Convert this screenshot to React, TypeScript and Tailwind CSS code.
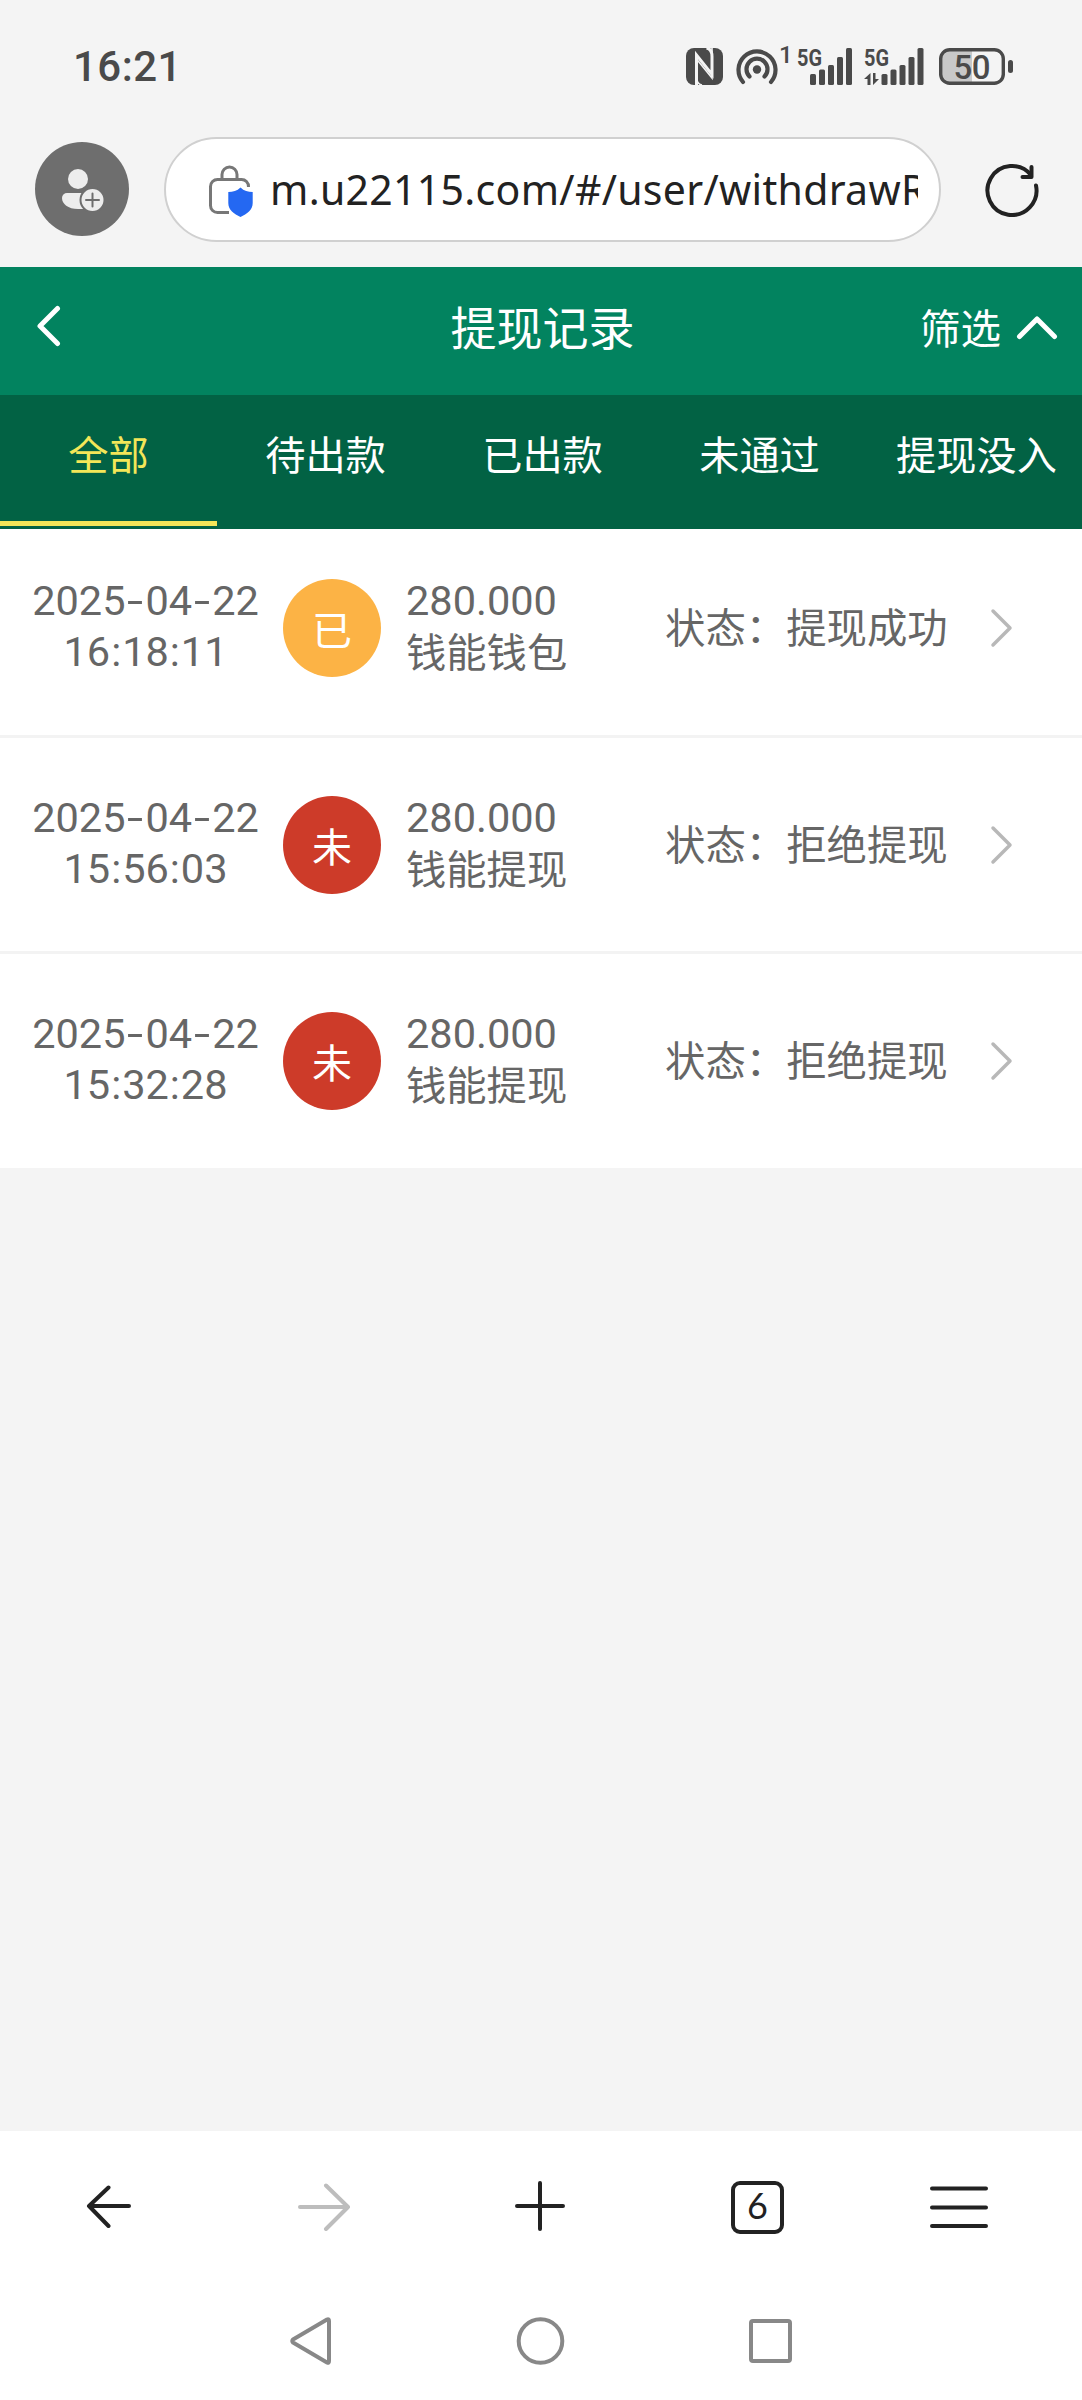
import React from "react";

const tabs = ["全部", "待出款", "已出款", "未通过", "提现没入"];

const records = [
  { date: "2025-04-22", time: "16:18:11", badge: "已", amount: "280.000", channel: "钱能钱包", status: "提现成功", ok: true },
  { date: "2025-04-22", time: "15:56:03", badge: "未", amount: "280.000", channel: "钱能提现", status: "拒绝提现", ok: false },
  { date: "2025-04-22", time: "15:32:28", badge: "未", amount: "280.000", channel: "钱能提现", status: "拒绝提现", ok: false },
];

/* Numerals with roomier separators between the digit groups. */
function Numerals({ value }: { value: string }) {
  return (
    <>
      {value.split(/([-:])/).map((part, i) => {
        if (part === "-") {
          return <span key={i} className="inline-block w-[20px] scale-x-140 text-center">-</span>;
        }
        if (part === ":") {
          return <span key={i} className="inline-block w-[12px] text-center">:</span>;
        }
        return <span key={i}>{part}</span>;
      })}
    </>
  );
}

function Signal() {
  return (
    <g fill="#4a4a4a">
      <rect x="0" y="26" width="6" height="11" rx="1.5" />
      <rect x="9" y="21.5" width="6" height="15.5" rx="1.5" />
      <rect x="18" y="17" width="6" height="20" rx="1.5" />
      <rect x="27" y="9" width="6" height="28" rx="1.5" />
      <rect x="36" y="0" width="6" height="37" rx="1.5" />
    </g>
  );
}

function StatusBar() {
  return (
    <div className="flex h-[132px] items-start justify-between pl-[73px] pr-[69px]">
      <div className="mt-[42px] font-['Roboto',sans-serif] text-[42px] leading-[50px] font-medium tracking-[0.3px] text-[#4a4a4a]">
        <Numerals value="16:21" />
      </div>
      <div className="mt-[48px] flex items-start">
        <svg width="37" height="37" viewBox="0 0 37 37" className="mr-[13px]">
          <rect width="37" height="37" rx="8" fill="#4a4a4a" />
          <path d="M10.500 37V7L26 26.500V8.500Q26 1 20.500 0" fill="none" stroke="#f4f4f4" strokeWidth="3" />
          <path d="M10.500 7V28.500Q10.500 36 16 37M26 0V30L10.500 11" fill="none" stroke="#f4f4f4" strokeWidth="1.600" />
        </svg>
        <svg width="42" height="37" viewBox="0 0 42 37" fill="none" stroke="#4a4a4a" strokeWidth="4.200" strokeLinecap="round" className="mr-[1px]">
          <path d="M7 34A18.500 18.500 0 1 1 35 34" />
          <path d="M13.500 28.500A10.500 10.500 0 1 1 28.500 28.500" />
          <circle cx="21" cy="21.500" r="4.200" fill="#4a4a4a" stroke="none" />
        </svg>
        <span className="-mt-[5px] mr-[9px] w-[9px] font-['Roboto',sans-serif] text-[24px] leading-[24px] font-medium text-[#4a4a4a]">1</span>
        <svg width="56" height="37" viewBox="0 0 56 37" className="mr-[11px] overflow-visible">
          <text x="0" y="18" textLength="25" lengthAdjust="spacingAndGlyphs" fontFamily="Roboto, sans-serif" fontWeight="700" fontSize="24" fill="#4a4a4a">5G</text>
          <g transform="translate(13 0)"><Signal /></g>
        </svg>
        <svg width="60" height="37" viewBox="0 0 60 37" className="mr-[15px] overflow-visible">
          <text x="0" y="18" textLength="25" lengthAdjust="spacingAndGlyphs" fontFamily="Roboto, sans-serif" fontWeight="700" fontSize="24" fill="#4a4a4a">5G</text>
          <path d="M0 31L6.500 25V37H3.500V31ZM9 25H11.500V31H15L9 37Z" fill="#4a4a4a" />
          <g transform="translate(17.500 0)"><Signal /></g>
        </svg>
        <svg width="74" height="37" viewBox="0 0 74 37">
          <path d="M33 2H10a8 8 0 0 0-8 8v17a8 8 0 0 0 8 8h23z" fill="#c8c8c8" />
          <rect x="1.700" y="1.700" width="62.600" height="33.600" rx="9" fill="none" stroke="#4a4a4a" strokeWidth="3.400" />
          <rect x="69" y="12" width="5" height="13" rx="2.500" fill="#4a4a4a" />
          <text x="33" y="30.500" textAnchor="middle" textLength="37" fontFamily="Roboto, sans-serif" fontWeight="500" fontSize="33" fill="#4a4a4a">50</text>
        </svg>
      </div>
    </div>
  );
}

function AddressBar() {
  return (
    <div className="flex h-[135px] items-start pl-[35px]">
      <div className="mt-[10px] flex size-[94px] shrink-0 rounded-full bg-[#6e6e6e] pl-[27px] pt-[27px]">
        <svg width="42" height="43" viewBox="0 0 42 43" fill="#ededed">
          <circle cx="16" cy="10" r="10" />
          <path d="M5 24H23V40H16C6 40 0 35 0 29A5 5 0 0 1 5 24Z" />
          <circle cx="30.500" cy="31" r="12" stroke="#6e6e6e" strokeWidth="2" />
          <path d="M24 31H37M30.500 24.500V37.500" stroke="#6e6e6e" strokeWidth="2" strokeLinecap="round" />
        </svg>
      </div>
      <div className="ml-[35px] mt-[5px] flex h-[105px] w-[777px] shrink-0 rounded-full border-[2.500px] border-[#d0d0d0] bg-white pl-[42px]">
        <svg width="47" height="52" viewBox="0 0 47 52" fill="none" className="mt-[26px] shrink-0">
          <path d="M14 14V9.500A7.500 7.500 0 0 1 29 9.500V14" stroke="#777" strokeWidth="3" />
          <path d="M21 47.500H9.500A7 7 0 0 1 2.500 40.500V21.500A7 7 0 0 1 9.500 14.500H33A7 7 0 0 1 40.500 22" stroke="#777" strokeWidth="3" />
          <path d="M32.500 22.500C36 26 40 27 44.700 27V38C44.700 45 39 49 32.500 52C26 49 20.300 45 20.300 38V27C25 27 29 26 32.500 22.500Z" fill="#2468f2" />
        </svg>
        <div className="mt-[20px] ml-[15px] h-[60px] w-[648px] overflow-hidden font-['Noto_Sans',sans-serif] text-[41px] leading-[60px] tracking-[0.3px] whitespace-nowrap text-[#222]">
          m.u22115.com/#/user/withdrawRecord
        </div>
      </div>
      <svg width="54" height="54" viewBox="0 0 54 54" fill="none" stroke="#222" strokeWidth="4" strokeLinecap="round" strokeLinejoin="round" className="ml-[44px] mt-[31px]">
        <path d="M51 22.500A24.500 24.500 0 1 1 46 12" />
        <path d="M46.500 4V14H37.500" />
      </svg>
    </div>
  );
}

function PageHeader() {
  return (
    <header className="grid h-[128px] grid-cols-[1fr_auto_1fr] items-start bg-[#02835f] text-white">
      <svg width="24" height="42" viewBox="0 0 24 42" fill="none" stroke="white" strokeWidth="5" strokeLinecap="round" strokeLinejoin="round" className="ml-[37px] mt-[38px]">
        <path d="M20.500 3.500L3 21L20.500 38.500" />
      </svg>
      <h1 className="mt-[28px] ml-[3px] text-[46px] leading-[60px]">提现记录</h1>
      <div className="mt-[31px] mr-[24px] flex items-start justify-end">
        <span className="text-[40.500px] leading-[58px]">筛选</span>
        <svg width="42" height="24" viewBox="0 0 42 24" fill="none" stroke="white" strokeWidth="5" strokeLinecap="round" strokeLinejoin="round" className="ml-[15px] mt-[18px]">
          <path d="M3.500 20.500L21 3L38.500 20.500" />
        </svg>
      </div>
    </header>
  );
}

function Tabs() {
  return (
    <nav className="grid h-[134px] grid-cols-[repeat(5,217px)] bg-[#026244]">
      {tabs.map((t, i) => (
        <button
          key={t}
          className={
            i === 0
              ? "mb-[3px] border-b-[5px] border-[#f3e658] pb-[10px] text-[40.200px] leading-[58px] whitespace-nowrap text-[#f3e658]"
              : "mb-[8px] pb-[10px] text-[40.200px] leading-[58px] whitespace-nowrap text-white"
          }
        >
          {t}
        </button>
      ))}
    </nav>
  );
}

function Row({ r }: { r: (typeof records)[number] }) {
  return (
    <li className="flex h-[216px] items-start border-b-[3px] border-[#f3f3f3] bg-white pt-[58px] text-[#666] first:h-[209px] first:pt-[50px] last:h-[214px] last:border-b-0">
      <div className="-mt-[4px] w-[291px] shrink-0 text-center font-['Roboto',sans-serif] text-[41.500px] leading-[51px]">
        <div><Numerals value={r.date} /></div>
        <div><Numerals value={r.time} /></div>
      </div>
      <div className={"-ml-[8px] flex size-[98px] shrink-0 items-center justify-center rounded-full text-[40px] leading-none text-white " + (r.ok ? "bg-[#fcb345]" : "bg-[#cd3b29]")}>
        {r.badge}
      </div>
      <div className="-mt-[3px] ml-[25px] w-[259px] shrink-0 text-[40.300px]">
        <div className="font-['Roboto',sans-serif] text-[41.500px] leading-[49px]">{r.amount}</div>
        <div className="leading-[49px]">{r.channel}</div>
      </div>
      <div className="mt-[19px] w-[325px] shrink-0 text-[40.400px] leading-[56px] whitespace-nowrap">状态：{r.status}</div>
      <svg width="24" height="40" viewBox="0 0 24 40" fill="none" stroke="#b8b8b8" strokeWidth="3.500" strokeLinejoin="round" strokeLinecap="round" className="mt-[29px]">
        <path d="M3 3L20 20L3 37" />
      </svg>
    </li>
  );
}

function BottomBars() {
  return (
    <footer className="h-[269px] bg-white">
      <div className="flex h-[152px] items-center pl-[86px]">
        <svg width="46" height="44" viewBox="0 0 46 44" fill="none" stroke="#222" strokeWidth="4" strokeLinecap="round" strokeLinejoin="round">
          <path d="M43 21H3M22.500 2.500L3 21L22.500 41" />
        </svg>
        <svg width="54" height="48" viewBox="0 0 54 48" fill="none" stroke="#bdbdbd" strokeWidth="4" strokeLinecap="round" strokeLinejoin="round" className="ml-[165px]">
          <path d="M3 24H51M29 2.500L51 24L29 46" />
        </svg>
        <svg width="52" height="52" viewBox="0 0 52 52" stroke="#222" strokeWidth="4" strokeLinecap="round" className="ml-[163px]">
          <path d="M3 25H49M26 2V48" />
        </svg>
        <div className="ml-[165px] flex h-[53px] w-[53px] items-center justify-center rounded-[9px] border-4 border-[#222] pb-[5px] font-['Lato',sans-serif] text-[36px] leading-none text-[#222]">6</div>
        <svg width="60" height="44" viewBox="0 0 60 44" stroke="#222" strokeWidth="4" strokeLinecap="round" className="ml-[145px]">
          <path d="M3 3.500H57M3 22.500H57M3 41H57" />
        </svg>
      </div>
      <div className="flex h-[117px] items-start pl-[289px] pt-[33px]">
        <svg width="44" height="50" viewBox="0 0 44 50" fill="none" stroke="#888" strokeWidth="4" strokeLinejoin="round">
          <path d="M38 3.500Q40 2.500 40 5V45Q40 47.500 38 46.500L4 26.500Q2.500 25 4 23.500Z" />
        </svg>
        <svg width="50" height="50" viewBox="0 0 50 50" fill="none" stroke="#888" strokeWidth="4" className="ml-[182px]">
          <circle cx="25.500" cy="25" r="21.800" />
        </svg>
        <div className="ml-[184px] mt-[3px] h-[44px] w-[43px] rounded-[4px] border-4 border-[#888]" />
      </div>
    </footer>
  );
}

export default function App() {
  return (
    <div className="flex h-[2400px] w-[1082px] flex-col overflow-hidden bg-[#f4f4f4] font-['Noto_Sans_CJK_SC',sans-serif]">
      <StatusBar />
      <AddressBar />
      <PageHeader />
      <Tabs />
      <ul className="flex-1">
        {records.map((r) => (
          <Row key={r.time} r={r} />
        ))}
      </ul>
      <BottomBars />
    </div>
  );
}
